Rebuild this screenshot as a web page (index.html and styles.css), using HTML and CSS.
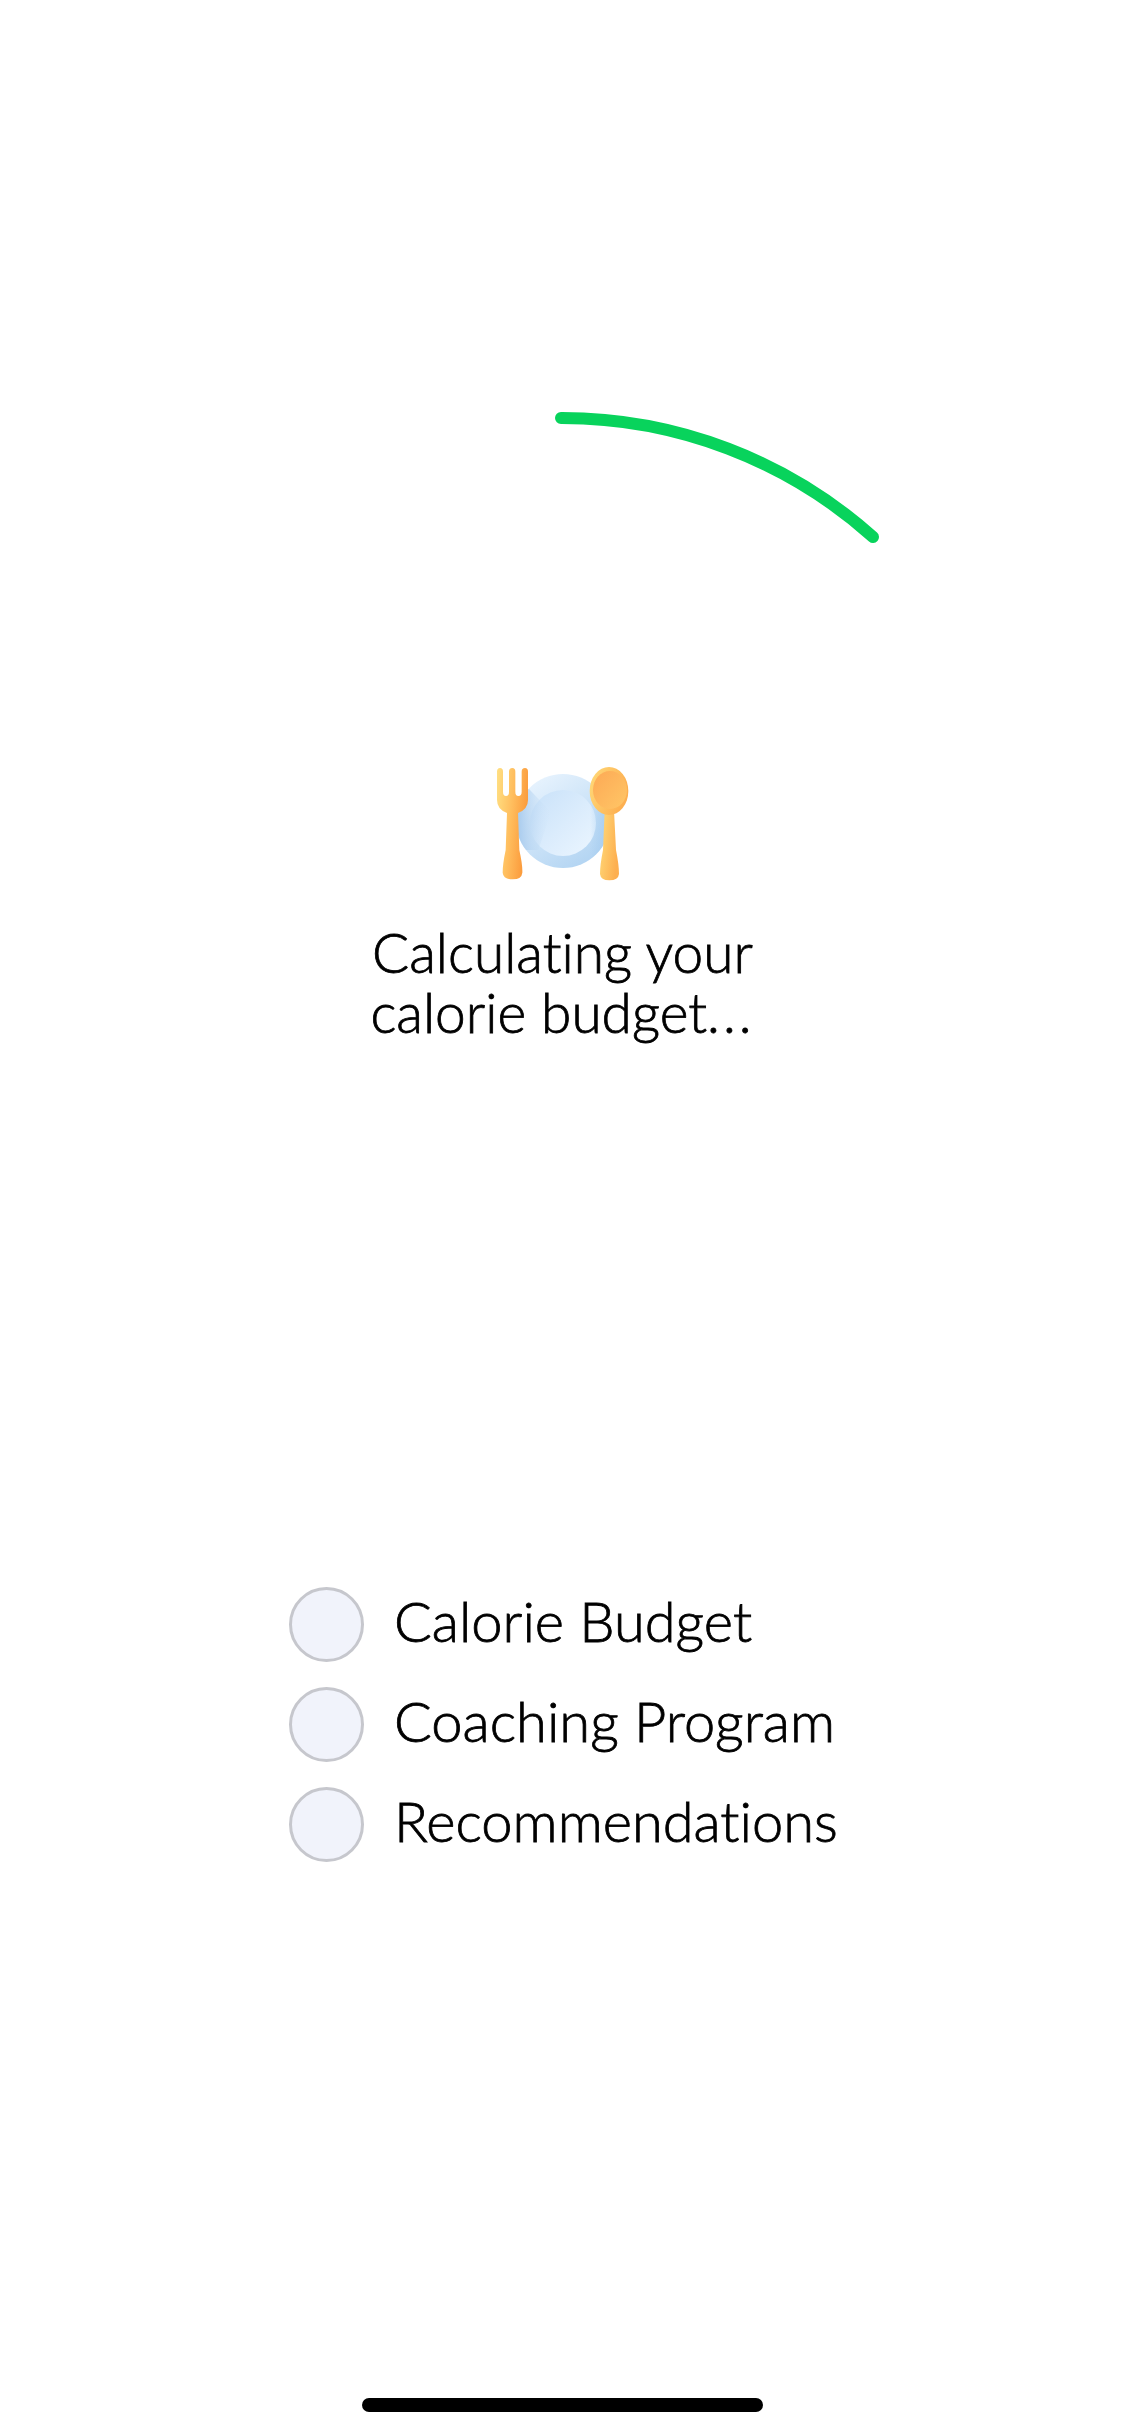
FILE: index.html
```html
<!DOCTYPE html>
<html lang="en">
<head>
<meta charset="utf-8">
<title>Calculating your calorie budget</title>
<link rel="stylesheet" href="styles.css">
</head>
<body>
<main class="screen">
  <svg class="spinner" viewBox="0 400 1125 150" aria-hidden="true">
    <path class="spinner-arc" d="M561 418 A466 466 0 0 1 873 537"/>
  </svg>
  <svg class="meal-icon" viewBox="0 0 555 480" aria-hidden="true">
    <defs>
      <linearGradient id="plate" x1="0.2" y1="0" x2="0.9" y2="1">
        <stop offset="0" stop-color="#e9f4fe"/>
        <stop offset="1" stop-color="#add1f1"/>
      </linearGradient>
      <linearGradient id="plateInner" x1="0" y1="0" x2="1" y2="1">
        <stop offset="0" stop-color="#c8e1f9"/>
        <stop offset="1" stop-color="#ecf6ff"/>
      </linearGradient>
      <linearGradient id="shade" x1="0" y1="0" x2="1" y2="0">
        <stop offset="0" stop-color="#9cc3ea"/>
        <stop offset="1" stop-color="#cfe4f8" stop-opacity="0"/>
      </linearGradient>
      <linearGradient id="shadeRight" x1="0" y1="0" x2="1" y2="0">
        <stop offset="0" stop-color="#a3cbef" stop-opacity="0"/>
        <stop offset="1" stop-color="#a3cbef"/>
      </linearGradient>
      <linearGradient id="fork" x1="0" y1="0" x2="1" y2="0.3">
        <stop offset="0" stop-color="#ffe083"/>
        <stop offset="0.55" stop-color="#ffbc5c"/>
        <stop offset="1" stop-color="#fb9b3c"/>
      </linearGradient>
      <linearGradient id="spoon" x1="0" y1="0" x2="1" y2="0.4">
        <stop offset="0" stop-color="#ffdb7a"/>
        <stop offset="1" stop-color="#fdaf50"/>
      </linearGradient>
      <linearGradient id="spoonBowl" x1="0" y1="0" x2="1" y2="1">
        <stop offset="0" stop-color="#fda955"/>
        <stop offset="1" stop-color="#ffc666"/>
      </linearGradient>
      <clipPath id="plateClip"><circle cx="279" cy="243" r="141"/></clipPath>
    </defs>
    <circle cx="279" cy="243" r="141" fill="url(#plate)"/>
    <circle cx="279" cy="249" r="99" fill="url(#plateInner)"/>
    <g clip-path="url(#plateClip)">
      <path d="M172 142 L243 216 L205 330 L130 330 L130 200 Z" fill="url(#shade)"/>
      <rect x="360" y="190" width="62" height="200" fill="url(#shadeRight)"/>
    </g>
    <path d="M81 95 Q81 84 90 84 Q99 84 99 95 L99 155 Q99 168 108 168 Q117 168 117 155 L117 95 Q117 84 127 84 Q136 84 136 95 L136 155 Q136 168 145 168 Q155 168 155 155 L155 95 Q155 84 165 84 Q174 84 174 95 L174 180 Q174 208 144 219 L148 330 Q158 375 157 398 Q155 418 128 418 Q100 418 98 398 Q98 372 107 330 L111 219 Q81 208 81 180 Z" fill="url(#fork)"/>
    <path d="M404 212 L399 330 Q390 375 390 402 Q392 421 418 421 Q445 421 447 402 Q447 375 438 330 L432 212 Z" fill="url(#spoon)"/>
    <ellipse cx="417" cy="153" rx="58" ry="72" fill="url(#spoon)"/>
    <ellipse cx="420" cy="150" rx="51" ry="57" fill="url(#spoonBowl)"/>
  </svg>
  <h1 class="headline">Calculating your<br>calorie budget<span class="dots">...</span></h1>
  <ul class="steps">
    <li class="step"><span class="step-dot"></span><span class="step-label">Calorie Budget</span></li>
    <li class="step"><span class="step-dot"></span><span class="step-label">Coaching Program</span></li>
    <li class="step"><span class="step-dot"></span><span class="step-label">Recommendations</span></li>
  </ul>
  <div class="home-indicator"></div>
</main>
</body>
</html>
```

FILE: styles.css
```css
html, body {
  margin: 0;
  padding: 0;
  background: #ffffff;
}

.screen {
  width: 1125px;
  height: 2436px;
  display: flex;
  flex-direction: column;
  align-items: center;
  overflow: hidden;
  font-family: "Lato", "Liberation Sans", sans-serif;
  font-weight: 300;
  font-variant-ligatures: none;
  -webkit-text-stroke: 0.8px #000000;
  color: #000000;
}

.spinner {
  display: block;
  width: 1125px;
  height: 150px;
  margin-top: 400px;
  flex: none;
}

.spinner-arc {
  fill: none;
  stroke: #08d35c;
  stroke-width: 12;
  stroke-linecap: round;
}

.meal-icon {
  display: block;
  width: 185px;
  height: 160px;
  margin-top: 190px;
  flex: none;
}

.headline {
  margin: 22px 0 0;
  font-size: 55px;
  line-height: 60px;
  font-weight: 300;
  text-align: center;
  white-space: nowrap;
}

.dots {
  letter-spacing: 3px;
}

.steps {
  list-style: none;
  margin: 545px 0 0;
  padding: 0 0 0 289px;
  align-self: stretch;
  display: flex;
  flex-direction: column;
  gap: 25px;
}

.step {
  display: flex;
  align-items: center;
  gap: 30px;
  height: 75px;
  font-size: 56px;
}

.step-label {
  padding-bottom: 8px;
}

.step-dot {
  width: 75px;
  height: 75px;
  box-sizing: border-box;
  border: 3px solid #c6c7cd;
  border-radius: 50%;
  background: #f1f3fb;
  flex: none;
}

.home-indicator {
  width: 401px;
  height: 14px;
  margin-top: auto;
  margin-bottom: 24px;
  border-radius: 7px;
  background: #000000;
  flex: none;
}
```
